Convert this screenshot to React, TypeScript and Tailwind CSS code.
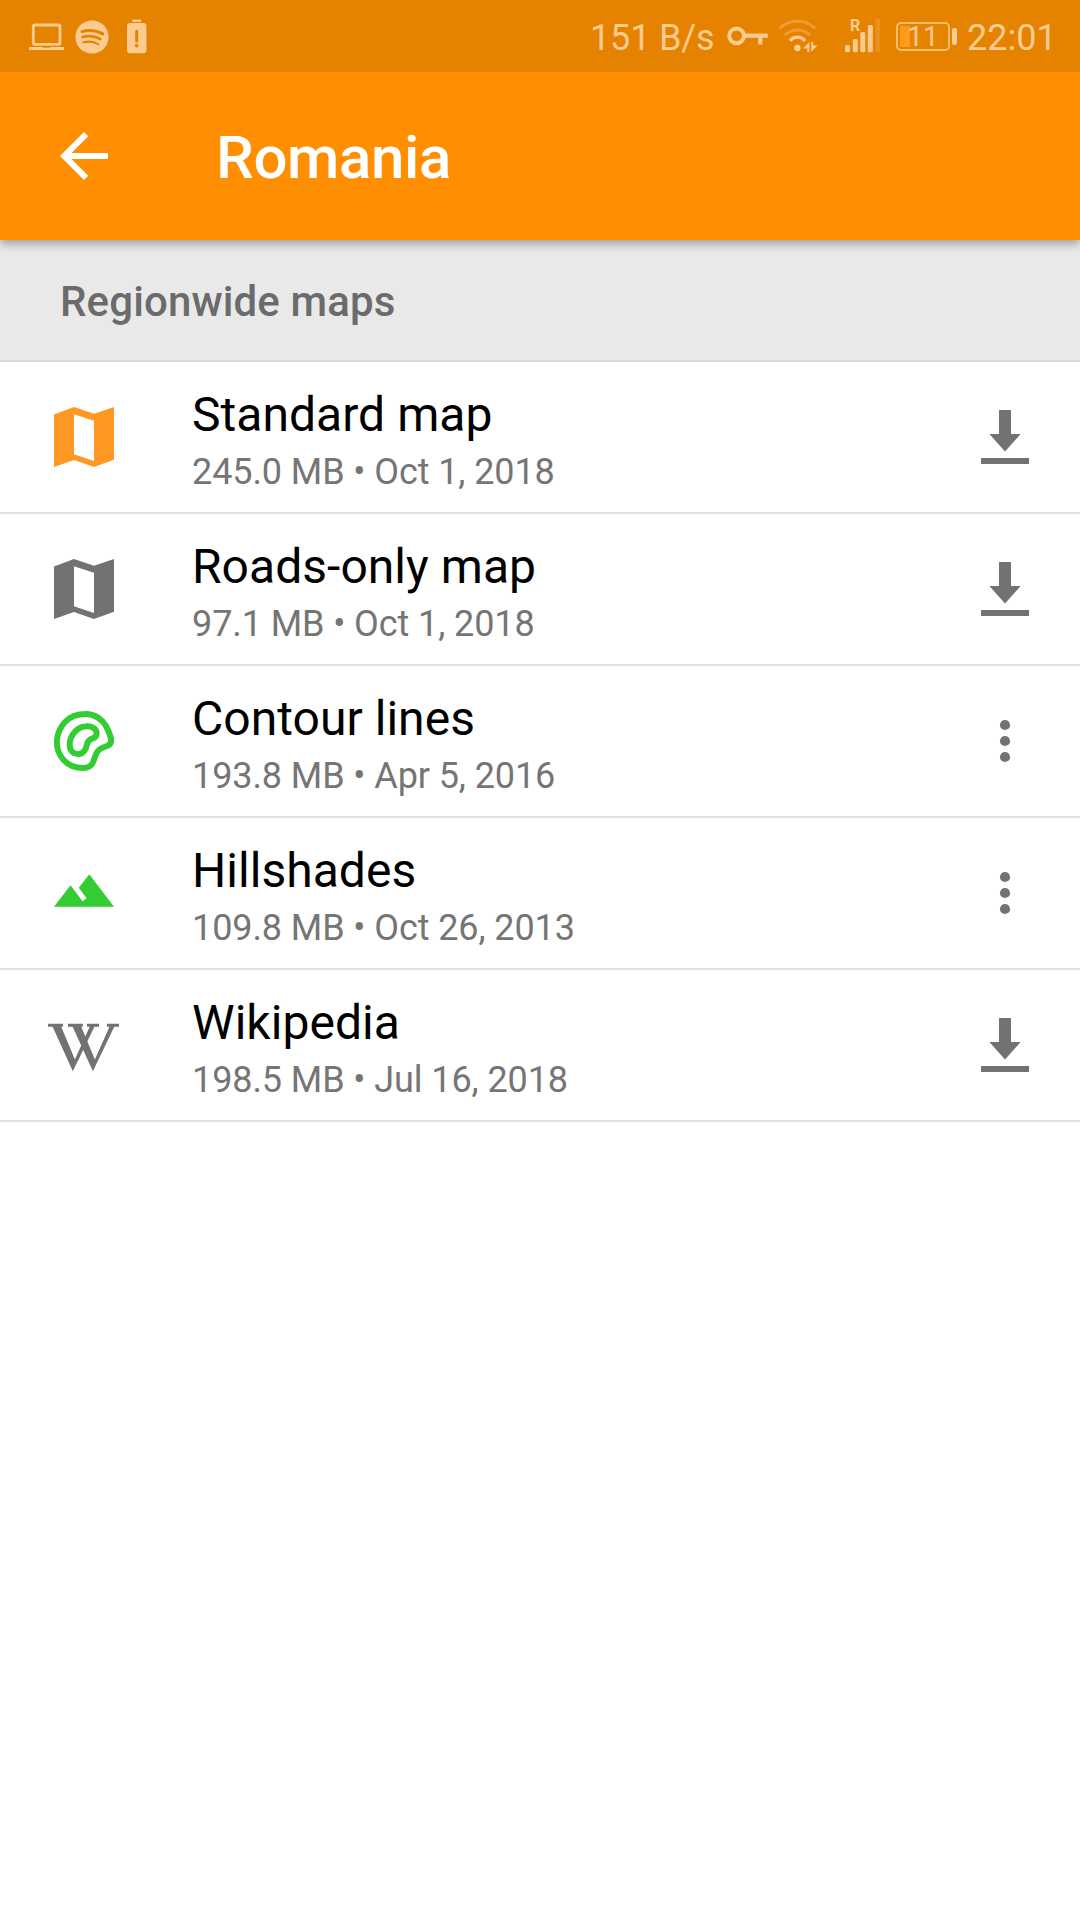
import type { ReactNode } from 'react';

type Action = 'download' | 'more';

interface MapItem {
  id: string;
  name: string;
  size: string;
  date: string;
  icon: ReactNode;
  action: Action;
}

function LaptopIcon() {
  return (
    <svg width="36" height="28" viewBox="0 0 36 28" fill="none">
      <rect x="4.3" y="2" width="26.7" height="19.3" rx="1.5" stroke="currentColor" strokeWidth="2.8" />
      <path d="M0 24h12.5c1 1 9 1 10 0H35v3H0z" fill="currentColor" />
    </svg>
  );
}

function SpotifyIcon() {
  return (
    <svg width="34" height="34" viewBox="0 0 34 34" fill="none">
      <circle cx="17" cy="17" r="16.6" fill="currentColor" />
      <g stroke="#e58300" strokeLinecap="round">
        <path d="M7 11.6c7-1.8 14.5-1.2 20.8 2.3" strokeWidth="3" />
        <path d="M7.6 17c6.3-1.6 12.5-.9 17.8 2.1" strokeWidth="2.6" />
        <path d="M8.5 22.2c5.3-1.2 10.3-.6 14.8 1.9" strokeWidth="2.2" />
      </g>
    </svg>
  );
}

function BatteryAlertIcon() {
  return (
    <svg width="20" height="35" viewBox="0 0 20 35">
      <rect x="5.2" y="0.5" width="9" height="2.4" rx="0.8" fill="currentColor" />
      <rect x="0" y="4" width="19.4" height="30.3" rx="3" fill="currentColor" />
      <rect x="8.2" y="11" width="3" height="12.5" rx="1" fill="#e58300" />
      <circle cx="9.7" cy="26.6" r="1.8" fill="#e58300" />
    </svg>
  );
}

function KeyIcon() {
  return (
    <svg width="42" height="20" viewBox="0 0 42 20" fill="none" stroke="currentColor">
      <circle cx="9.6" cy="9.8" r="7.4" strokeWidth="4" />
      <path d="M17 9.6h23.8M33.3 10v8.6" strokeWidth="4.2" />
    </svg>
  );
}

function WifiIcon() {
  return (
    <svg width="40" height="34" viewBox="0 0 40 34" fill="none" stroke="currentColor">
      <path d="M1.4 9.4C12-.6 26.5-.6 37.2 9.4" strokeWidth="3" opacity="0.35" />
      <path d="M6.6 16.2c7.6-6.9 17.8-6.9 25.4 0" strokeWidth="3" opacity="0.35" />
      <path d="M12 21.9c4-5.1 11.2-5.1 15 0" strokeWidth="3.4" />
      <circle cx="19.4" cy="29" r="3.2" fill="currentColor" stroke="none" />
      <path d="M31.4 23v10h-2v-3.6h-4.4zM33.2 33V23h2v3.6h4.2z" fill="currentColor" stroke="none" />
    </svg>
  );
}

function SignalIcon() {
  return (
    <div className="relative h-[34px] w-9">
      <svg width="36" height="34" viewBox="0 0 36 34" fill="currentColor">
        <rect x="0" y="26" width="5" height="7.3" rx="1.5" />
        <rect x="7.8" y="20" width="5" height="13.3" rx="1.5" />
        <rect x="15.3" y="13" width="5" height="20.3" rx="1.5" />
        <rect x="22.8" y="6" width="5" height="27.3" rx="1.5" />
        <rect x="30.5" y="0" width="4.6" height="33.3" rx="1" opacity="0.2" />
      </svg>
      <span className="absolute left-[5px] top-0 text-[16px] font-bold leading-[13px]">R</span>
    </div>
  );
}

function BatteryLevel({ level }: { level: number }) {
  return (
    <div className="flex items-center gap-[2px]">
      <div className="relative flex h-[29px] w-[54px] items-center justify-center rounded-[5px] border-2 border-[#f9bb6d]">
        <div className="absolute left-[2px] top-[2px] h-[21px] w-[10px] bg-[#ff9b1c]" />
        <span className="relative text-[28px] leading-[28px]">{level}</span>
      </div>
      <div className="h-[17px] w-[5px] rounded-[2px] bg-current" />
    </div>
  );
}

function StatusBar() {
  return (
    <div className="relative z-10 flex h-[72px] items-start bg-[#e58300] text-[#fccb90]">
      <div className="ml-[29px] mt-[23px]"><LaptopIcon /></div>
      <div className="ml-[10px] mt-[19.5px]"><SpotifyIcon /></div>
      <div className="ml-[18px] mt-[19px]"><BatteryAlertIcon /></div>
      <div className="ml-auto mt-[17px] w-[137px] whitespace-nowrap text-[36px] leading-[42px] tracking-[-0.15px]">151 B/s</div>
      <div className="mt-[26px]"><KeyIcon /></div>
      <div className="ml-[9px] mt-[19px]"><WifiIcon /></div>
      <div className="ml-[27px] mt-[19px]"><SignalIcon /></div>
      <div className="ml-[15px] mt-[22px]"><BatteryLevel level={11} /></div>
      <div className="ml-[10px] mt-[17px] w-[113px] text-[36px] leading-[42px]">22:01</div>
    </div>
  );
}

function MapIcon() {
  return (
    <svg width="60" height="60" viewBox="0 0 60 60" fill="currentColor" fillRule="evenodd">
      <path d="M0 7.4 20 0l20 6.8L60 0v52.8L40 60l-20-7-20 7zM20 7.3v39.9l20 6.8V13.7z" />
    </svg>
  );
}

function ContourIcon() {
  return (
    <svg width="60" height="60" viewBox="0 0 180 180" fill="none" stroke="currentColor" strokeWidth="18">
      <path d="M96 9c27 0 49 17 60 36 7 13 12 26 15 37 2 12-2 19-12 23-14 5-23 7-30 19-6 11-8 21-13 32-6 12-14 15-28 15-24 0-49-10-64-30C13 126 7 104 9 86c2-20 11-38 23-52C49 15 70 9 96 9z" />
      <path d="M96 46c18-2 32 8 32 20 0 10-5 15-14 17-9 3-13 8-15 17-3 15-9 26-23 29-16 2-29-9-29-28 0-14 7-30 17-40 9-9 20-14 32-15z" />
    </svg>
  );
}

function HillshadeIcon() {
  return (
    <svg width="60" height="60" viewBox="0 0 60 60" fill="currentColor">
      <path d="M0 43.7 16.5 22.3 28.6 38.3 32.6 35.2 24.8 24.8 35.3 11.3 60 43.7z" />
    </svg>
  );
}

function WikipediaIcon() {
  return (
    <svg width="72" height="60" viewBox="0 0 72 60" fill="currentColor">
      <path d="M0 8.7h15v3H0zM20 8.7h14.8v3H20zM39 8.7h12v3H39zM59 8.7h12v3H59z" />
      <path d="M4.3 11h8.6l14 33.500L42 11h4.800L24.800 56.200z" />
      <path d="M24.300 11h8.600l14 33.500L61.800 11h4.800L44.900 56.200z" />
    </svg>
  );
}

function DownloadIcon() {
  return (
    <svg width="48" height="54" viewBox="0 0 48 54" fill="currentColor">
      <path d="M18 0h12v24h9.6L24 41.6 8.4 24H18zM0 48h48v6H0z" />
    </svg>
  );
}

function MoreIcon() {
  return (
    <svg width="48" height="54" viewBox="0 0 48 54" fill="currentColor">
      <circle cx="24" cy="11" r="5.1" />
      <circle cx="24" cy="27" r="5.1" />
      <circle cx="24" cy="43" r="5.1" />
    </svg>
  );
}

const items: MapItem[] = [
  {
    id: 'standard',
    name: 'Standard map',
    size: '245.0 MB',
    date: 'Oct 1, 2018',
    icon: <span className="text-[#ff9822]"><MapIcon /></span>,
    action: 'download',
  },
  {
    id: 'roads',
    name: 'Roads-only map',
    size: '97.1 MB',
    date: 'Oct 1, 2018',
    icon: <MapIcon />,
    action: 'download',
  },
  {
    id: 'contour',
    name: 'Contour lines',
    size: '193.8 MB',
    date: 'Apr 5, 2016',
    icon: <span className="text-[#33cc33]"><ContourIcon /></span>,
    action: 'more',
  },
  {
    id: 'hillshade',
    name: 'Hillshades',
    size: '109.8 MB',
    date: 'Oct 26, 2013',
    icon: <span className="text-[#33cc33]"><HillshadeIcon /></span>,
    action: 'more',
  },
  {
    id: 'wikipedia',
    name: 'Wikipedia',
    size: '198.5 MB',
    date: 'Jul 16, 2018',
    icon: <WikipediaIcon />,
    action: 'download',
  },
];

function MapRow({ item }: { item: MapItem }) {
  return (
    <li className="flex h-[152px] items-center border-b-2 border-[#e0e0e0] pl-12 pr-[51px] text-[#727272]">
      <div className="flex w-[72px] shrink-0 justify-center">{item.icon}</div>
      <div className="ml-[72px] flex-1 pt-[5px]">
        <h3 className="text-[48px] leading-[56px] tracking-[0.04px] text-black">{item.name}</h3>
        <p className="mt-[8px] text-[36px] leading-[42px] tracking-[-0.09px] text-[#757575]">
          {item.size} • {item.date}
        </p>
      </div>
      <button type="button" aria-label={item.action}>
        {item.action === 'download' ? <DownloadIcon /> : <MoreIcon />}
      </button>
    </li>
  );
}

export default function App() {
  return (
    <div className="min-h-[1920px] w-[1080px] bg-white font-['Roboto',sans-serif]">
      <StatusBar />

      <header className="relative flex h-[168px] items-center bg-[#ff8f00] pl-12 text-white shadow-[0_4px_9px_rgba(0,0,0,0.32)]">
        <svg width="72" height="72" viewBox="0 0 24 24" fill="currentColor">
          <path d="M20 11H7.83l5.59-5.59L12 4l-8 8 8 8 1.41-1.41L7.83 13H20v-2z" />
        </svg>
        <h1 className="ml-24 mt-[4px] text-[60px] font-medium leading-[70px] tracking-[-0.35px]">Romania</h1>
      </header>

      <h2 className="flex h-[122px] items-center border-b-2 border-[#dadada] bg-[#e9e9e9] pl-[60px] pt-1 text-[42px] font-medium leading-[50px] tracking-[0.13px] text-[#6b6b6b]">
        Regionwide maps
      </h2>

      <ul>
        {items.map((item) => (
          <MapRow key={item.id} item={item} />
        ))}
      </ul>
    </div>
  );
}
